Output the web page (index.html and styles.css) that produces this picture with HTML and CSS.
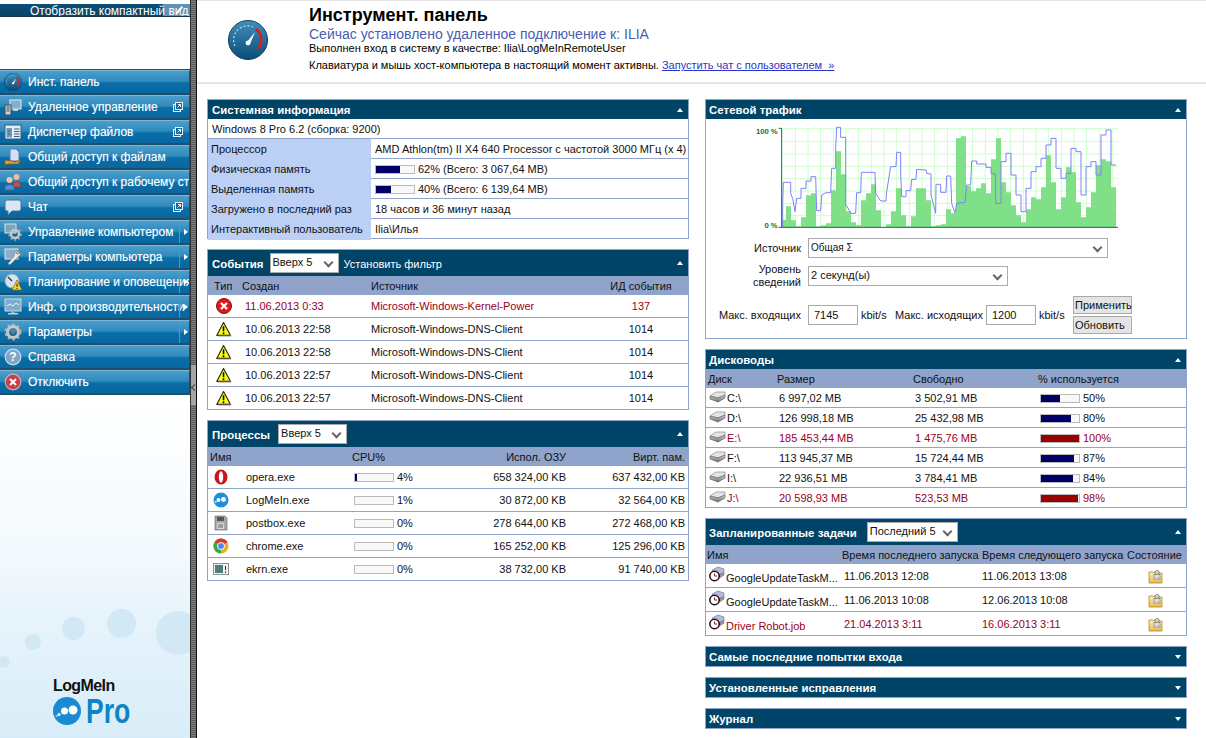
FILE: index.html
```html
<!DOCTYPE html>
<html lang="ru">
<head>
<meta charset="utf-8">
<title>LogMeIn</title>
<link rel="stylesheet" href="styles.css">
</head>
<body>
<svg class="sprite" width="0" height="0" aria-hidden="true">
  <defs>
    <linearGradient id="g-gauge" x1="0" y1="0" x2="0" y2="1"><stop offset="0" stop-color="#3f8fbd"/><stop offset="1" stop-color="#0b4c78"/></linearGradient>
    <linearGradient id="g-disk" x1="0" y1="0" x2="0" y2="1"><stop offset="0" stop-color="#d8d8d8"/><stop offset="1" stop-color="#6c6c6c"/></linearGradient>
    <linearGradient id="g-folder" x1="0" y1="0" x2="0" y2="1"><stop offset="0" stop-color="#fff3b8"/><stop offset="1" stop-color="#e8b94c"/></linearGradient>
    <symbol id="i-gauge" viewBox="0 0 40 40">
      <circle cx="20" cy="20" r="19.5" fill="url(#g-gauge)" stroke="#123f5c"/>
      <path d="M7 26a14 14 0 0 1 18-19" fill="none" stroke="#bfe0f2" stroke-width="1.2" stroke-dasharray="2 2"/>
      <path d="M28 9a14 14 0 0 1 2 20" fill="none" stroke="#d81e1e" stroke-width="2.6"/>
      <path d="M19 22l8-10-5 12z" fill="#fff"/>
      <circle cx="20" cy="23" r="2.4" fill="#fff"/>
    </symbol>
    <symbol id="i-remote" viewBox="0 0 18 18">
      <rect x="6" y="2" width="11" height="9" fill="#7fb0d0" stroke="#dfe8ee"/><rect x="9" y="11" width="5" height="2" fill="#ccd"/>
      <rect x="1" y="7" width="6" height="10" fill="#c8d0d6" stroke="#3f4f5a"/><path d="M2.500 9h3M2.500 11h3M2.500 13h3" stroke="#3f4f5a"/>
    </symbol>
    <symbol id="i-files" viewBox="0 0 18 18">
      <rect x="1" y="2" width="16" height="14" fill="#e4eef6" stroke="#37607c"/><rect x="2.500" y="5" width="5.500" height="9.500" fill="#6f9cbc"/><path d="M10 6h5.500M10 8.500h5.500M10 11h5.500M10 13.500h5.500M3.500 8h3M3.500 11h3" stroke="#3f5f7a"/>
    </symbol>
    <symbol id="i-share" viewBox="0 0 18 18">
      <path d="M6 1h6l3 3v9H6z" fill="#cfe2f8" stroke="#5a7fa8"/><path d="M1 12l6 1 4 1 6-2-3 4H4l-3 1z" fill="#ea9b3a" stroke="#8a5512" stroke-width=".7"/>
    </symbol>
    <symbol id="i-users" viewBox="0 0 18 18">
      <circle cx="12.500" cy="4" r="3" fill="#eebb99"/><path d="M9 14v-4q3.500-3 7.500 0v4z" fill="#c0504d" stroke="#7a3230" stroke-width=".6"/>
      <circle cx="5.500" cy="7" r="3" fill="#f0c8a8"/><path d="M1 17v-4q4.500-3 9 0v4z" fill="#5b8ec7" stroke="#2f5a8a" stroke-width=".6"/>
    </symbol>
    <symbol id="i-chat" viewBox="0 0 18 18">
      <path d="M3 2h12q2 0 2 2v7q0 2-2 2H8l-4 4v-4H3q-2 0-2-2V4q0-2 2-2z" fill="#d9e7f5" stroke="#45729a"/>
    </symbol>
    <symbol id="i-gear" viewBox="0 0 18 18">
      <circle cx="9" cy="9" r="5.500" fill="none" stroke="#c8c8c8" stroke-width="3"/><circle cx="9" cy="9" r="7.500" fill="none" stroke="#b5b5b5" stroke-width="2" stroke-dasharray="2.500 2.400"/><circle cx="9" cy="9" r="2" fill="#777"/>
    </symbol>
    <symbol id="i-mgmt" viewBox="0 0 18 18">
      <rect x="1" y="1" width="11" height="9" fill="#7aa4c4" stroke="#d8e2e8"/>
      <circle cx="11" cy="11" r="4" fill="none" stroke="#c8c8c8" stroke-width="2.400"/><circle cx="11" cy="11" r="6" fill="none" stroke="#aaa" stroke-width="1.600" stroke-dasharray="2 2"/>
    </symbol>
    <symbol id="i-wrench" viewBox="0 0 18 18">
      <rect x="1" y="1" width="13" height="10" fill="#88aecb" stroke="#dbe5ec"/>
      <path d="M15 2l-3 3 1.500 1.500 3-2q1 3-2.500 4.500L7 16q-2 1.500-3-.5L10 8q0-5 5-6z" fill="#e8e8e8" stroke="#666" stroke-width=".6"/>
    </symbol>
    <symbol id="i-plan" viewBox="0 0 18 18">
      <circle cx="8" cy="8" r="7" fill="#d6e4ee" stroke="#8ea9bd"/><path d="M4 4l4 4" stroke="#334" stroke-width="1.200"/>
      <path d="M13 7l5 10H8z" fill="#f7d21c" stroke="#6d5a00" stroke-width=".6"/><path d="M13 10.500v3.500M13 15v1" stroke="#222"/>
    </symbol>
    <symbol id="i-perf" viewBox="0 0 18 18">
      <rect x="1" y="1" width="16" height="12" fill="#7caed0" stroke="#d0d8de"/><path d="M3 8l3-2 3 2 3-3 3 2" fill="none" stroke="#eaf4fb"/><rect x="7" y="13" width="4" height="2" fill="#9ba6ad"/><rect x="4" y="15" width="10" height="1.500" fill="#c7cfd4"/>
    </symbol>
    <symbol id="i-help" viewBox="0 0 18 18">
      <circle cx="9" cy="9" r="7.800" fill="#7ba6c5" stroke="#c7dbe9" stroke-width="1.200"/><text x="9" y="13" class="svg-q">?</text>
    </symbol>
    <symbol id="i-off" viewBox="0 0 18 18">
      <circle cx="9" cy="9" r="7.800" fill="#c6404c" stroke="#d7a8ad" stroke-width="1.200"/><path d="M6 6l6 6M12 6l-6 6" stroke="#fff" stroke-width="2"/>
    </symbol>
    <symbol id="i-ext" viewBox="0 0 10 10">
      <rect x=".5" y="2.500" width="7" height="7" fill="none" stroke="#e8f2f8"/><rect x="2.500" y=".5" width="7" height="7" fill="#0f6a9f" stroke="#e8f2f8"/><path d="M4.500 5.500l3-3M5 2.500h2.500V5" fill="none" stroke="#e8f2f8"/>
    </symbol>
    <symbol id="i-error" viewBox="0 0 16 16">
      <circle cx="8" cy="8" r="7.500" fill="#e01818" stroke="#8c0d0d"/><path d="M5 5l6 6M11 5l-6 6" stroke="#fff" stroke-width="2.200"/>
    </symbol>
    <symbol id="i-warn" viewBox="0 0 17 16">
      <path d="M8 1.200L15.500 14.800H.8z" fill="#fbfb14" stroke="#222" stroke-width="1.200" stroke-linejoin="round"/><path d="M8 5v5.500M8 11.500v2" stroke="#111" stroke-width="1.700"/><path d="M2 15.500h14l-1-2" fill="none" stroke="#999"/>
    </symbol>
    <symbol id="i-opera" viewBox="0 0 16 16">
      <ellipse cx="8" cy="8" rx="6.500" ry="7.500" fill="#c8141c"/><ellipse cx="8" cy="8" rx="2.200" ry="5.800" fill="#fff"/>
    </symbol>
    <symbol id="i-lmi" viewBox="0 0 16 16">
      <circle cx="8" cy="8" r="7.500" fill="#1c90dc"/><circle cx="5.500" cy="8" r="2" fill="#fff"/><circle cx="10.500" cy="7.500" r="2.400" fill="#fff"/><circle cx="2.800" cy="9.800" r=".9" fill="#fff"/>
    </symbol>
    <symbol id="i-postbox" viewBox="0 0 16 16">
      <path d="M2 1h10l2 2v12H2z" fill="#a9aaaa" stroke="#5e5e5e" stroke-width=".6"/><rect x="4" y="2" width="7" height="4" fill="#555"/><rect x="4" y="8" width="7" height="6" fill="#d5d5d5"/><path d="M5 10h5M5 12h5" stroke="#666"/>
    </symbol>
    <symbol id="i-chrome" viewBox="0 0 16 16">
      <circle cx="8" cy="8" r="7.500" fill="#e8b21c"/><path d="M8 8L1.500 4.200A7.500 7.500 0 0 1 14.500 4.200z" fill="#d9382e"/><path d="M8 8L1.500 4.200A7.500 7.500 0 0 0 8 15.500z" fill="#3aa648"/><circle cx="8" cy="8" r="3.500" fill="#4a86e8" stroke="#fff"/>
    </symbol>
    <symbol id="i-ekrn" viewBox="0 0 16 16">
      <rect x=".5" y="2.500" width="15" height="11" fill="#eef2f2" stroke="#8a9296"/><rect x="2" y="4" width="8" height="8" fill="#4d7d78"/><path d="M12.500 5v4M12.500 10.500v1.500" stroke="#333"/>
    </symbol>
    <symbol id="i-disk" viewBox="0 0 17 12">
      <path d="M1 5l6-4h9v3l-7 3z" fill="#e4e4e4" stroke="#777" stroke-width=".6"/><path d="M1 5l8 2 7-3v3l-7 4-8-3z" fill="url(#g-disk)" stroke="#555" stroke-width=".6"/>
    </symbol>
    <symbol id="i-task" viewBox="0 0 16 16">
      <path d="M3 4l6-3 6 2v6l-6 4z" fill="#b8b8dc" stroke="#6a6a92" stroke-width=".6"/><path d="M9 8l6-2v3l-6 4z" fill="#8f8f8f"/>
      <circle cx="5.500" cy="10" r="4.700" fill="#fff" stroke="#111" stroke-width="1.500"/><path d="M5.500 7.500V10h2.500" fill="none" stroke="#c01010"/>
    </symbol>
    <symbol id="i-lock" viewBox="0 0 15 15">
      <path d="M1 3h5l1 1h7v10H1z" fill="url(#g-folder)" stroke="#b08a2e" stroke-width=".8"/><path d="M7 6V3.500a2 2 0 0 1 4 0V6" fill="none" stroke="#777"/><rect x="6" y="5.500" width="6" height="4.500" fill="#d9dadc" stroke="#777" stroke-width=".6"/>
    </symbol>
  </defs>
</svg>

<div class="app">
  <aside class="side">
    <div class="dots">
      <span class="dot dot-a"></span><span class="dot dot-b"></span><span class="dot dot-c"></span><span class="dot dot-d"></span><span class="dot dot-e"></span>
    </div>
    <div class="compact"><span class="compact-btn"></span><span class="compact-text">Отобразить компактный вид</span></div>
    <nav class="menu">
      <a class="item"><svg class="ico"><use href="#i-gauge"/></svg><span class="lbl">Инст. панель</span></a>
      <a class="item"><svg class="ico"><use href="#i-remote"/></svg><span class="lbl">Удаленное управление</span><svg class="ext"><use href="#i-ext"/></svg></a>
      <a class="item"><svg class="ico"><use href="#i-files"/></svg><span class="lbl">Диспетчер файлов</span><svg class="ext"><use href="#i-ext"/></svg></a>
      <a class="item"><svg class="ico"><use href="#i-share"/></svg><span class="lbl">Общий доступ к файлам</span></a>
      <a class="item"><svg class="ico"><use href="#i-users"/></svg><span class="lbl">Общий доступ к рабочему столу</span></a>
      <a class="item"><svg class="ico"><use href="#i-chat"/></svg><span class="lbl">Чат</span><svg class="ext"><use href="#i-ext"/></svg></a>
      <a class="item has-sub"><svg class="ico"><use href="#i-mgmt"/></svg><span class="lbl">Управление компьютером</span><span class="sub"></span></a>
      <a class="item has-sub"><svg class="ico"><use href="#i-wrench"/></svg><span class="lbl">Параметры компьютера</span><span class="sub"></span></a>
      <a class="item has-sub"><svg class="ico"><use href="#i-plan"/></svg><span class="lbl">Планирование и оповещения</span><span class="sub"></span></a>
      <a class="item has-sub"><svg class="ico"><use href="#i-perf"/></svg><span class="lbl">Инф. о производительности</span><span class="sub"></span></a>
      <a class="item has-sub"><svg class="ico"><use href="#i-gear"/></svg><span class="lbl">Параметры</span><span class="sub"></span></a>
      <a class="item"><svg class="ico"><use href="#i-help"/></svg><span class="lbl">Справка</span></a>
      <a class="item"><svg class="ico"><use href="#i-off"/></svg><span class="lbl">Отключить</span></a>
    </nav>
    <div class="logo">
      <div class="logo-name">LogMeIn</div>
      <div class="logo-row">
        <svg class="logo-mark" viewBox="0 0 28 28"><circle cx="14" cy="14" r="14" fill="#1a8ad2"/><circle cx="11.500" cy="14" r="3.500" fill="#fff"/><circle cx="20" cy="13" r="4.500" fill="#fff"/><circle cx="6" cy="17.500" r="1.600" fill="#fff"/><circle cx="3.500" cy="19" r=".8" fill="#fff"/></svg>
        <span class="logo-pro">Pro</span>
      </div>
    </div>
  </aside>
  <div class="divider"><span class="grip"></span></div>

  <main class="main">
    <header class="head">
      <svg class="head-ico"><use href="#i-gauge"/></svg>
      <div class="head-text">
        <h1 class="title">Инструмент. панель</h1>
        <div class="subtitle">Сейчас установлено удаленное подключение к: ILIA</div>
        <div class="note note-a">Выполнен вход в систему в качестве: Ilia\LogMeInRemoteUser</div>
        <div class="note note-b">Клавиатура и мышь хост-компьютера в настоящий момент активны. <a class="link">Запустить чат с пользователем &nbsp;»</a></div>
      </div>
    </header>

    <div class="columns">
      <div class="col">
        <section class="panel">
          <div class="phead phead-s"><b>Системная информация</b><i class="up"></i></div>
          <div class="os">Windows 8 Pro 6.2 (сборка: 9200)</div>
          <div class="kv"><span class="k">Процессор</span><span class="v">AMD Athlon(tm) II X4 640 Processor с частотой 3000 МГц (x 4)</span></div>
          <div class="kv"><span class="k">Физическая память</span><span class="v"><span class="meter"><span class="fill" style="width:62%"></span></span>62% (Всего: 3 067,64 MB)</span></div>
          <div class="kv"><span class="k">Выделенная память</span><span class="v"><span class="meter"><span class="fill" style="width:40%"></span></span>40% (Всего: 6 139,64 MB)</span></div>
          <div class="kv"><span class="k">Загружено в последний раз</span><span class="v">18 часов и 36 минут назад</span></div>
          <div class="kv kv-last"><span class="k">Интерактивный пользователь</span><span class="v">Ilia\Илья</span></div>
        </section>

        <section class="panel">
          <div class="phead phead-l"><b>События</b><span class="sel sel-ev">Вверх 5</span><span class="phead-link">Установить фильтр</span><i class="up"></i></div>
          <div class="row ev th"><span class="c1">Тип</span><span>Создан</span><span>Источник</span><span class="ctr">ИД события</span></div>
          <div class="row ev tr red"><svg class="sm"><use href="#i-error"/></svg><span class="d">11.06.2013 0:33</span><span>Microsoft-Windows-Kernel-Power</span><span class="ctr">137</span></div>
          <div class="row ev tr"><svg class="sm"><use href="#i-warn"/></svg><span class="d">10.06.2013 22:58</span><span>Microsoft-Windows-DNS-Client</span><span class="ctr">1014</span></div>
          <div class="row ev tr"><svg class="sm"><use href="#i-warn"/></svg><span class="d">10.06.2013 22:58</span><span>Microsoft-Windows-DNS-Client</span><span class="ctr">1014</span></div>
          <div class="row ev tr"><svg class="sm"><use href="#i-warn"/></svg><span class="d">10.06.2013 22:57</span><span>Microsoft-Windows-DNS-Client</span><span class="ctr">1014</span></div>
          <div class="row ev tr last"><svg class="sm"><use href="#i-warn"/></svg><span class="d">10.06.2013 22:57</span><span>Microsoft-Windows-DNS-Client</span><span class="ctr">1014</span></div>
        </section>

        <section class="panel">
          <div class="phead phead-l"><b>Процессы</b><span class="sel sel-pr">Вверх 5</span><i class="up"></i></div>
          <div class="row pr th"><span>Имя</span><span></span><span>CPU%</span><span class="rt">Испол. ОЗУ</span><span class="rt">Вирт. пам.</span></div>
          <div class="row pr tr"><svg class="sm"><use href="#i-opera"/></svg><span>opera.exe</span><span class="cpu"><span class="meter"><span class="fill" style="width:4%"></span></span>4%</span><span class="rt">658 324,00 KB</span><span class="rt">637 432,00 KB</span></div>
          <div class="row pr tr"><svg class="sm"><use href="#i-lmi"/></svg><span>LogMeIn.exe</span><span class="cpu"><span class="meter"></span>1%</span><span class="rt">30 872,00 KB</span><span class="rt">32 564,00 KB</span></div>
          <div class="row pr tr"><svg class="sm"><use href="#i-postbox"/></svg><span>postbox.exe</span><span class="cpu"><span class="meter"></span>0%</span><span class="rt">278 644,00 KB</span><span class="rt">272 468,00 KB</span></div>
          <div class="row pr tr"><svg class="sm"><use href="#i-chrome"/></svg><span>chrome.exe</span><span class="cpu"><span class="meter"></span>0%</span><span class="rt">165 252,00 KB</span><span class="rt">125 296,00 KB</span></div>
          <div class="row pr tr last"><svg class="sm"><use href="#i-ekrn"/></svg><span>ekrn.exe</span><span class="cpu"><span class="meter"></span>0%</span><span class="rt">38 732,00 KB</span><span class="rt">91 740,00 KB</span></div>
        </section>
      </div>

      <div class="col col-r">
        <section class="panel traffic">
          <div class="phead phead-s"><b>Сетевой трафик</b><i class="up"></i></div>
          <svg class="chart" viewBox="165 90 1125 330">
            <path class="grid" d="M286 100V397M324 100V397M362 100V397M400 100V397M438 100V397M476 100V397M514 100V397M552 100V397M590 100V397M628 100V397M666 100V397M704 100V397M742 100V397M780 100V397M818 100V397M856 100V397M894 100V397M932 100V397M970 100V397M1008 100V397M1046 100V397M1084 100V397M1122 100V397M1160 100V397M1198 100V397M1236 100V397M245 101H1254M245 139H1254M245 177H1254M245 214H1254M245 251H1254M245 288H1254M245 325H1254M245 362H1254"/>
            <path class="bars" d="M248 397V375H258V334H273V376H288V394H303V367H318V301H333V295H348V394H363V391H378V385H393V286H408V169H423V238H438V349H453V382H468V391H483V316H498V295H513V268H528V346H543V397H558V388H573V349H588V280H603V361H618V394H633V364H648V280H678V316H693V394H708V391H723V388H738V343H753V355H768V130H783V124H798V274H813V289H828V280H843V265H858V295H873V193H888V130H903V262H918V292H933V331H948V361H963V382H978V343H993V307H1008V313H1023V277H1038V181H1053V262H1068V343H1083V307H1098V217H1113V232H1128V322H1143V367H1158V337H1173V292H1188V211H1203V193H1218V199H1233V277H1248V397Z"/>
            <path class="line" d="M248 397V330L250 262H272V295L278 310L285 350L290 310H303V280H318V258H333V245H347L350 347H362L365 300L378 293H392L395 220H407V160L410 97H422V127H437V328L453 355H467L470 293H482L484 232H525L527 295L542 318H558L560 290L572 215H588L590 172H602V238L605 305H618V287H632L635 253H648L650 223L678 225L680 235L693 237V300L707 355L708 268H722V292H738L740 243H752L755 325L765 355L770 325L795 322L800 270H812L815 198H830V207H858V217H873V235L887 237V325H903V200H918V175H933V240H948V300H963V350H978V280H993V230H1008V215H1023V190H1038V150H1053V130H1068V220H1083V250H1098V235H1113V160H1128V170H1143V300H1158V215H1173V200H1188V240H1203V120H1218V105H1233V210H1248"/>
            <path class="axis" d="M245 100V397M236 100H245M236 397H1254"/>
            <text class="tick" x="233" y="116">100 %</text>
            <text class="tick" x="233" y="398">0 %</text>
          </svg>
          <div class="form">
            <label class="flab">Источник</label><span class="sel sel-src">Общая Σ</span>
            <label class="flab flab-2">Уровень сведений</label><span class="sel sel-lvl">2 секунд(ы)</span>
          </div>
          <div class="limits">
            <label class="flab">Макс. входящих</label><span class="inp">7145</span><span class="unit">kbit/s</span>
            <label class="out">Макс. исходящих</label><span class="inp">1200</span><span class="unit">kbit/s</span>
            <div class="btns"><span class="btn">Применить</span><span class="btn">Обновить</span></div>
          </div>
        </section>

        <section class="panel">
          <div class="phead phead-s"><b>Дисководы</b><i class="up"></i></div>
          <div class="row dk th"><span>Диск</span><span>Размер</span><span>Свободно</span><span>% используется</span></div>
          <div class="row dk tr"><span class="dn"><svg class="disk"><use href="#i-disk"/></svg>C:\</span><span class="nv">6 997,02 MB</span><span class="nv">3 502,91 MB</span><span class="pc"><span class="meter"><span class="fill" style="width:50%"></span></span>50%</span></div>
          <div class="row dk tr"><span class="dn"><svg class="disk"><use href="#i-disk"/></svg>D:\</span><span class="nv">126 998,18 MB</span><span class="nv">25 432,98 MB</span><span class="pc"><span class="meter"><span class="fill" style="width:80%"></span></span>80%</span></div>
          <div class="row dk tr red"><span class="dn"><svg class="disk"><use href="#i-disk"/></svg>E:\</span><span class="nv">185 453,44 MB</span><span class="nv">1 475,76 MB</span><span class="pc"><span class="meter"><span class="fill fill-red" style="width:100%"></span></span>100%</span></div>
          <div class="row dk tr"><span class="dn"><svg class="disk"><use href="#i-disk"/></svg>F:\</span><span class="nv">113 945,37 MB</span><span class="nv">15 724,44 MB</span><span class="pc"><span class="meter"><span class="fill" style="width:87%"></span></span>87%</span></div>
          <div class="row dk tr"><span class="dn"><svg class="disk"><use href="#i-disk"/></svg>I:\</span><span class="nv">22 936,51 MB</span><span class="nv">3 784,41 MB</span><span class="pc"><span class="meter"><span class="fill" style="width:84%"></span></span>84%</span></div>
          <div class="row dk tr last red"><span class="dn"><svg class="disk"><use href="#i-disk"/></svg>J:\</span><span class="nv">20 598,93 MB</span><span class="nv">523,53 MB</span><span class="pc"><span class="meter"><span class="fill fill-red" style="width:98%"></span></span>98%</span></div>
        </section>

        <section class="panel">
          <div class="phead phead-l"><b>Запланированные задачи</b><span class="sel sel-tk">Последний 5</span><i class="up"></i></div>
          <div class="row tk th"><span>Имя</span><span>Время последнего запуска</span><span>Время следующего запуска</span><span>Состояние</span></div>
          <div class="row tk tr"><span class="tn"><svg class="task"><use href="#i-task"/></svg><span class="tname">GoogleUpdateTaskM...</span></span><span class="td">11.06.2013 12:08</span><span class="td">11.06.2013 13:08</span><svg class="lock"><use href="#i-lock"/></svg></div>
          <div class="row tk tr"><span class="tn"><svg class="task"><use href="#i-task"/></svg><span class="tname">GoogleUpdateTaskM...</span></span><span class="td">11.06.2013 10:08</span><span class="td">12.06.2013 10:08</span><svg class="lock"><use href="#i-lock"/></svg></div>
          <div class="row tk tr last red"><span class="tn"><svg class="task"><use href="#i-task"/></svg><span class="tname">Driver Robot.job</span></span><span class="td">21.04.2013 3:11</span><span class="td">16.06.2013 3:11</span><svg class="lock"><use href="#i-lock"/></svg></div>
        </section>

        <section class="panel"><div class="phead phead-s"><b>Самые последние попытки входа</b><i class="down"></i></div></section>
        <section class="panel"><div class="phead phead-s"><b>Установленные исправления</b><i class="down"></i></div></section>
        <section class="panel"><div class="phead phead-s"><b>Журнал</b><i class="down"></i></div></section>
      </div>
    </div>
  </main>
</div>
</body>
</html>
```

FILE: styles.css
```css
* { box-sizing: border-box; }
html, body { margin: 0; height: 738px; overflow: hidden; background: #fff; }
body { font: 11px/13px "Liberation Sans", Arial, sans-serif; color: #111; }
.sprite { position: absolute; }
.svg-q { font: bold 12px "Liberation Sans", sans-serif; fill: #fff; text-anchor: middle; }

.app { display: flex; height: 738px; }

/* sidebar */
.side { position: relative; width: 190px; flex: none; display: flex; flex-direction: column; overflow: hidden;
  background: linear-gradient(#fff 0, #fff 394px, #f3f9fd 560px, #e6f3fb 620px, #d9edf8 738px); }
.dots { position: absolute; inset: 0; }
.dot { position: absolute; border-radius: 50%; background: #d2e8f5; }
.dot-a { left: -2px; top: 656px; width: 12px; height: 12px; }
.dot-b { left: 25px; top: 634px; width: 16px; height: 16px; }
.dot-c { left: 62px; top: 617px; width: 23px; height: 23px; }
.dot-d { left: 107px; top: 609px; width: 29px; height: 29px; }
.dot-e { left: 156px; top: 611px; width: 44px; height: 44px; }
.compact { position: relative; height: 17px; flex: none; padding: 4px 0 0 30px; color: #fff; font-size: 12px; line-height: 15px; white-space: nowrap; overflow: hidden; display: flex;
  background: linear-gradient(#0c4f78, #0a4263) 0 4px / 100% 13px no-repeat; border-bottom: 1px solid #16364c; }
.compact-text { position: relative; flex: none; }
.compact-btn { position: absolute; left: 163px; top: 4px; width: 27px; height: 13px; background: #5d93b8; }
.compact-btn::after { content: ""; position: absolute; left: 12px; top: 5px; width: 9px; height: 2px; background: #fff; transform: rotate(-50deg); }
.menu { position: relative; margin-top: 52px; border-top: 1px solid #234e6a; display: flex; flex-direction: column; flex: none; }
.item { position: relative; height: 25px; display: flex; align-items: center; color: #fff; font-size: 12px; white-space: nowrap; overflow: hidden; padding-left: 4px;
  background: linear-gradient(#4c9ecb 0, #2f8abd 46%, #0a6ea8 54%, #08679f 100%);
  border-top: 1px solid #7ab6d8; border-bottom: 2px solid #234e6a; border-right: 1px solid #234e6a; }
.ico { width: 18px; height: 18px; flex: none; margin-right: 6px; }
.lbl { flex: none; text-shadow: 0 0 1px rgba(255,255,255,.35); }
.ext { position: absolute; left: 173px; top: 6px; width: 10px; height: 10px; }
.has-sub .sub { position: absolute; left: 179px; top: 0; bottom: 0; width: 11px; border-left: 1px solid #4f9ac5; }
.has-sub .sub::after { content: ""; position: absolute; left: 4px; top: 8px; border: 3.500px solid transparent; border-left: 4px solid #fff; border-right: 0; }
.logo { position: relative; margin-top: auto; padding: 0 0 13px 53px; }
.logo-name { font: bold 16px/17px "Liberation Sans", sans-serif; letter-spacing: -.6px; color: #111; }
.logo-row { display: flex; align-items: center; gap: 5px; margin-top: 3px; }
.logo-mark { width: 28px; height: 28px; flex: none; }
.logo-pro { font: bold 35px/28px "Liberation Sans", sans-serif; color: #0d83c8; transform: scaleX(.76); transform-origin: left center; }

.divider { position: relative; width: 7px; flex: none; border-left: 1px solid #333; border-right: 1px solid #111;
  background: repeating-linear-gradient(#5e5e5e 0, #5e5e5e 1px, #7a7a7a 1px, #7a7a7a 2px); }
.grip { position: absolute; left: 0; right: 0; top: 365px; height: 40px; background: #a5a5a5; }
.grip::after { content: ""; position: absolute; left: 1px; top: 20px; width: 4px; height: 4px; border: solid #444; border-width: 0 0 1px 1px; transform: rotate(45deg); }

/* main */
.main { flex: 1; min-width: 0; display: flex; flex-direction: column; }
.head { height: 84px; flex: none; display: flex; border-top: 1px solid #e4e4e4; border-bottom: 2px solid #e6e6e6; }
.head-ico { width: 40px; height: 40px; margin: 19px 41px 0 31px; flex: none; }
.head-text { padding-top: 3px; }
.title { margin: 0; font: bold 18px/22px "Liberation Sans", sans-serif; color: #000; }
.subtitle { font-size: 14px; line-height: 14px; color: #4a5cb0; margin-top: 1px; }
.note { font-size: 11px; line-height: 15px; color: #000; }
.note-b { margin-top: 2px; }
.link { color: #2a35c8; text-decoration: underline; }

.columns { display: grid; grid-template-columns: 482px 482px; column-gap: 16px; padding: 15px 0 0 10px; }
.col { display: flex; flex-direction: column; gap: 10px; }
.panel { border: 1px solid #8fa3cc; background: #fff; }

.phead { position: relative; background: #004468; color: #fff; display: flex; align-items: center; padding-left: 4px; white-space: nowrap; }
.col-r .phead { padding-left: 3px; }
.phead b { font-size: 11.400px; letter-spacing: .05px; margin-top: 2px; }
.phead-s { height: 19px; }
.phead-l { height: 26px; }
.up, .down { position: absolute; right: 5px; top: 50%; margin-top: -2px; border: 3.500px solid transparent; }
.up { border-top: 0; border-bottom: 4px solid #fff; }
.down { border-bottom: 0; border-top: 4px solid #fff; }
.phead-link { margin: 2px 0 0 5px; }

.sel { display: inline-block; position: relative; background: #fff; color: #111; border: 1px solid #aaa; height: 20px; line-height: 17px; padding-left: 2px; font-size: 11px; }
.sel::after { content: ""; position: absolute; right: 6px; top: 5px; width: 5px; height: 5px; border: solid #666; border-width: 0 2px 2px 0; transform: rotate(45deg); }
.sel-ev { width: 69px; margin-left: 6px; }
.sel-pr { width: 69px; margin-left: 8px; }
.sel-tk { width: 91px; margin-left: 10px; }
.sel-src { width: 300px; font-size: 10px; }
.sel-lvl { width: 200px; }

.os { height: 20px; line-height: 21px; padding-left: 4px; border-bottom: 1px solid #8fa3cc; }
.kv { display: grid; grid-template-columns: 163px 1fr; height: 20px; line-height: 21px; border-bottom: 1px solid #8fa3cc; }
.kv-last { border-bottom: 0; height: 19px; }
.k { background: #bcd0f5; padding-left: 3px; }
.v { padding-left: 4px; display: flex; align-items: center; white-space: nowrap; }
.meter { display: inline-block; width: 40px; height: 9px; border: 1px solid #bbb; background: #f8f8f8; margin-right: 3px; flex: none; }
.fill { display: block; height: 100%; background: #000066; }
.fill-red { background: #990000; }

.row { display: grid; align-items: center; white-space: nowrap; }
.th { background: #8fa3cb; height: 19px; padding-top: 2px; color: #111; }
.tr { border-bottom: 1px solid #8fa3cc; }
.row.last { border-bottom: 0; }
.red { color: #990022; }
.ctr { text-align: center; }
.rt { text-align: right; }

.ev { grid-template-columns: 34px 129px 215px 110px; }
.ev.th .c1 { padding-left: 6px; }
.ev.tr { height: 23px; }
.ev.tr.last { height: 22px; }
.ev .d { padding-left: 3px; }
.sm { width: 16px; height: 16px; margin-left: 8px; }

.pr { grid-template-columns: 38px 106px 112px 102px 119px; }
.pr.th > span:first-child { padding-left: 2px; }
.pr.tr { height: 23px; }
.pr.tr.last { height: 22px; }
.pr .sm { margin-left: 5px; }
.cpu { display: flex; align-items: center; padding-left: 2px; }

.traffic { height: 240px; }
.chart { display: block; width: 375px; height: 110px; margin: 6px 0 0 49px; }
.grid { stroke: #ccffcc; stroke-width: 3; fill: none; }
.bars { fill: #7fe088; }
.line { stroke: #8080ff; stroke-width: 3; fill: none; }
.axis { stroke: #007744; stroke-width: 3; fill: none; }
.tick { font: bold 23px "Liberation Sans", sans-serif; fill: #007744; text-anchor: end; }
.form { display: grid; grid-template-columns: 95px 1fr; column-gap: 7px; row-gap: 5px; align-items: center; margin-top: 3px; justify-items: start; }
.flab { justify-self: end; text-align: right; }
.flab-2 { width: 60px; line-height: 13px; }
.limits { display: flex; align-items: center; margin-top: 7px; padding-left: 12px; }
.limits .flab { width: 83px; }
.inp { width: 50px; height: 20px; border: 1px solid #aaa; line-height: 18px; padding-left: 5px; margin-left: 7px; flex: none; font-size: 11px; }
.unit { margin-left: 3px; width: 33px; flex: none; }
.out { margin-left: 1px; width: 88px; flex: none; white-space: nowrap; }
.out + .inp { margin-left: 3px; }
.btns { display: flex; flex-direction: column; gap: 2px; margin-left: 1px; }
.btn { background: #e4e4e4; border: 1px solid #aaa; height: 18px; line-height: 16px; padding-left: 1px; width: 59px; font-size: 11px; }

.dk { grid-template-columns: 69px 136px 125px 148px; }
.dk.th { padding-left: 2px; }
.dk.tr { height: 20px; padding: 2px 0 0 3px; }
.dk.tr.last { height: 19px; }
.dn { display: flex; align-items: center; }
.disk { width: 17px; height: 12px; margin-right: 1px; margin-top: -4px; }
.nv { padding-left: 1px; }
.pc { display: flex; align-items: center; padding-left: 1px; }

.tk { grid-template-columns: 135px 140px 145px 1fr; }
.tk.th { padding-left: 1px; }
.tk.tr { height: 24px; padding: 2px 0 0 3px; }
.tk.tr.last { height: 23px; }
.tn { display: flex; align-items: center; }
.tname { margin-top: 3px; }
.task { width: 16px; height: 16px; margin: -5px 1px 0 0; flex: none; }
.td + .td { margin-left: -2px; }
.lock { width: 15px; height: 15px; margin-left: 19px; }
```
